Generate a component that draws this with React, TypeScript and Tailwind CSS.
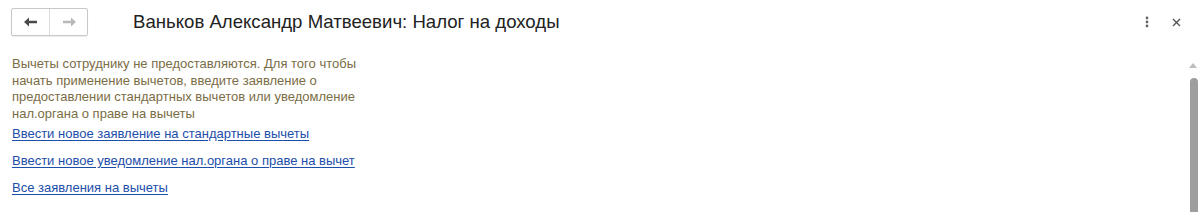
import React from "react";

export default function App() {
  return (
    <div className="w-[1198px] h-[212px] bg-white relative overflow-hidden" style={{ fontFamily: '"Liberation Sans", Arial, sans-serif' }}>
      <div className="flex items-center h-[44px] pl-[11px] pr-[17px]">
        <div className="flex h-[28px] border border-[#c8c8c8] rounded-[2px] shadow-[0_1px_1px_rgba(0,0,0,0.08)]">
          <button className="w-[38px] flex items-center justify-center border-r border-[#dcdcdc]">
            <svg width="14" height="10" viewBox="0 0 14 10">
              <path d="M0 5 L5 0.5 L5 3.8 L13 3.8 L13 6.2 L5 6.2 L5 9.5 Z" fill="#4a4a4a" />
            </svg>
          </button>
          <button className="w-[37px] flex items-center justify-center">
            <svg width="14" height="10" viewBox="0 0 14 10">
              <path d="M14 5 L9 0.5 L9 3.8 L1 3.8 L1 6.2 L9 6.2 L9 9.5 Z" fill="#b8b8b8" />
            </svg>
          </button>
        </div>
        <div className="ml-[45px] text-[18.6px] text-[#222] leading-none">Ваньков Александр Матвеевич: Налог на доходы</div>
        <div className="ml-auto flex items-center gap-[23px]">
          <svg width="4" height="12" viewBox="0 0 4 12">
            <circle cx="2" cy="2" r="1.4" fill="#666" />
            <circle cx="2" cy="6" r="1.4" fill="#666" />
            <circle cx="2" cy="10" r="1.4" fill="#666" />
          </svg>
          <svg width="9" height="9" viewBox="0 0 9 9">
            <path d="M1 1 L8 8 M8 1 L1 8" stroke="#555" strokeWidth="1.4" />
          </svg>
        </div>
      </div>
      <div className="pl-[12px] pt-[12px] text-[13px]">
        <div className="text-[#7a6d45] leading-[16.5px] w-[350px]">
          Вычеты сотруднику не предоставляются. Для того чтобы начать применение вычетов, введите заявление о предоставлении стандартных вычетов или уведомление нал.органа о праве на вычеты
        </div>
        <div className="flex flex-col items-start mt-[4px] gap-[11px] text-[#1c4eaa] leading-[16px]">
          <a className="underline underline-offset-[2px] cursor-pointer">Ввести новое заявление на стандартные вычеты</a>
          <a className="underline underline-offset-[2px] cursor-pointer">Ввести новое уведомление нал.органа о праве на вычет</a>
          <a className="underline underline-offset-[2px] cursor-pointer">Все заявления на вычеты</a>
        </div>
      </div>
      <div className="absolute right-0 top-[60px] bottom-0 w-[10px] flex flex-col items-center">
        <svg width="8" height="5" viewBox="0 0 8 5" className="mt-[3px]">
          <path d="M0 5 L4 0 L8 5 Z" fill="#bdbdbd" />
        </svg>
        <div className="mt-[10px] w-[8px] flex-1 bg-[#9e9e9e] rounded-t-[4px] ml-[2px]" />
      </div>
    </div>
  );
}
